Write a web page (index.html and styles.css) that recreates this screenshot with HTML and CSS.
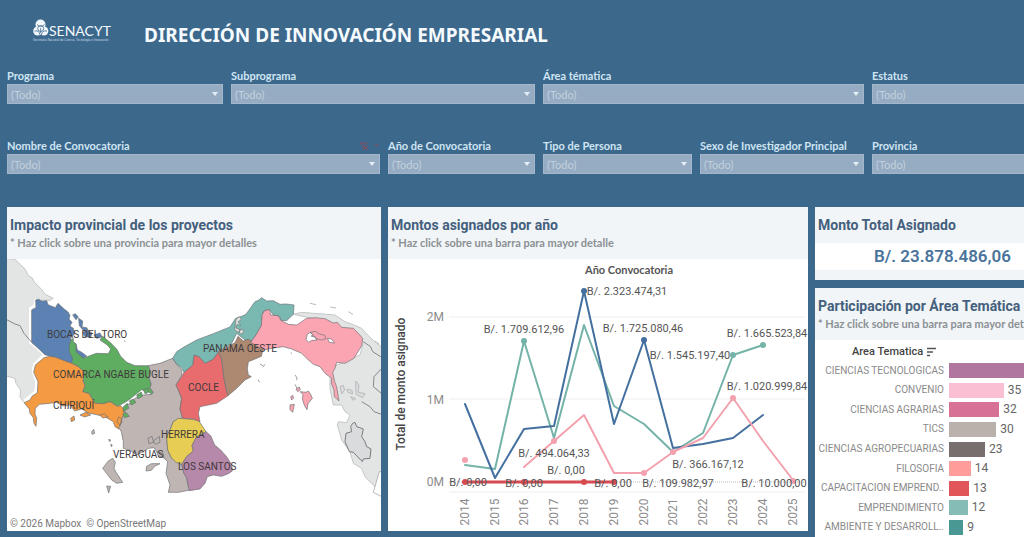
FILE: index.html
```html
<!DOCTYPE html>
<html lang="es">
<head>
<meta charset="utf-8">
<meta name="viewport" content="width=device-width, initial-scale=1">
<title>Dirección de Innovación Empresarial</title>
<link rel="stylesheet" href="styles.css">
</head>
<body>
<header class="top">
  <svg class="logo" viewBox="0 0 78 24" role="img" aria-label="SENACYT">
    <g fill="#f2f8fc">
      <circle cx="7.500" cy="5.500" r="5"/><circle cx="4.800" cy="12" r="4.600"/><circle cx="10.800" cy="12" r="4.600"/>
    </g>
    <g fill="none" stroke="#3c688c" stroke-width=".8">
      <circle cx="7.700" cy="9.500" r="3"/><path d="M4 5.500q3.700 4 7.500 0M1.500 12q5-1 5.500 4M14 12q-5-1-5.500 4M7.700 9v5"/>
    </g>
    <text class="logo-name" x="16" y="17">SENACYT</text>
    <text class="logo-sub" x="0" y="22">Secretaría Nacional de Ciencia, Tecnología e Innovación</text>
  </svg>
  <h1>DIRECCIÓN DE INNOVACIÓN EMPRESARIAL</h1>
</header>

<form class="filters">
  <div class="row row-a">
    <div class="field"><label for="f1">Programa</label><div class="pick"><select id="f1"><option>(Todo)</option></select></div></div>
    <div class="field"><label for="f2">Subprograma</label><div class="pick"><select id="f2"><option>(Todo)</option></select></div></div>
    <div class="field"><label for="f3">Área tématica</label><div class="pick"><select id="f3"><option>(Todo)</option></select></div></div>
    <div class="field"><label for="f4">Estatus</label><div class="pick open"><select id="f4"><option>(Todo)</option></select></div></div>
  </div>
  <div class="row row-b">
    <div class="field">
      <div class="field-head"><label for="f5">Nombre de Convocatoria</label>
        <svg class="clear" viewBox="0 0 22 10" aria-hidden="true"><path d="M2 2h7L6.500 5v3L5 7V5zM6 5l4 4M10 5L6 9" fill="none" stroke="#7d4f63"/><path d="M16 3h5l-2.500 3z" fill="#665a72"/></svg>
      </div>
      <div class="pick"><select id="f5"><option>(Todo)</option></select></div>
    </div>
    <div class="field"><label for="f6">Año de Convocatoria</label><div class="pick"><select id="f6"><option>(Todo)</option></select></div></div>
    <div class="field"><label for="f7">Tipo de Persona</label><div class="pick"><select id="f7"><option>(Todo)</option></select></div></div>
    <div class="field"><label for="f8">Sexo de Investigador Principal</label><div class="pick"><select id="f8"><option>(Todo)</option></select></div></div>
    <div class="field"><label for="f9">Provincia</label><div class="pick open"><select id="f9"><option>(Todo)</option></select></div></div>
  </div>
</form>

<main class="board">
  <section class="card">
    <div class="card-head"><h2>Impacto provincial de los proyectos</h2><p>* Haz click sobre una provincia para mayor detalles</p></div>
    <svg class="plot" viewBox="7 259 374 272" role="img" aria-label="Mapa de Panamá por provincia">
      <g transform="translate(0 255) scale(.33333)" stroke-linejoin="round">
        <g fill="#e3e4e4" stroke="#c4c6c8" stroke-width="3">
          <path d="M15 10L45 13 60 28 75 42 85 62 98 70 103 82 125 103 135 118 160 130 150 136 122 136 108 135 106 155 93 163 93 262 135 298 103 330 101 350 112 382 108 410 70 440 60 425 62 405 48 385 45 370 15 362z"/>
          <path d="M880 178L905 172 940 175 980 178 1005 180 1035 200 1062 210 1085 220 1105 242 1130 265 1150 278V725L1120 690 1095 665 1085 640 1060 625 1050 590 1025 555 1012 510 1015 500 1040 503 1050 480 1035 470 1025 450 1000 450 990 400 990 340 1080 300 1090 262 1020 215 960 195z"/>
        </g>
        <path d="M108 133L104 152 91 160V262L133 298L103 328 99 350 110 382 107 410 72 438" fill="none" stroke="#fff" stroke-width="8"/>
        <path d="M18 193L45 207 60 212 72 235 95 262 120 280 135 298M1090 260L1112 275 1118 290 1150 310M1150 335L1122 365 1120 395 1150 420M1085 440L1110 455 1122 470 1150 480" fill="none" stroke="#85898c" stroke-width="3"/>
        <path d="M1052 515L1058 505 1065 502 1070 515 1090 522 1085 545 1095 560 1100 575 1113 582 1110 610 1090 612 1087 620 1060 592 1048 590 1035 560 1038 535 1055 530z" fill="#d9dbdc" stroke="#777b7e" stroke-width="3"/>
        <path d="M1138 650L1120 712 1145 725V650z" fill="#fff" stroke="#999" stroke-width="2"/>
        <g fill="#d9dbdc" stroke="#b9bbbd" stroke-width="3"><path d="M1020 395l10-4 4 14-9 12zM1040 403l15 2 3 12-14-5zM1067 378l10 12-2 22 20 4-7 12-20-10zM1052 425l15 6-8 5zM930 145l18 4M990 156l18 3M1045 170l14 8M1125 258l12 9"/></g>
        <g stroke="#6b6f72" stroke-width="2">
          <path fill="#5c82b3" d="M95 165L108 158 107 135 116 133 126 139 140 137 144 149 166 158 174 145 190 160 205 172 210 182 207 192 216 202 210 213 220 220 225 236 212 248 215 260 228 266 232 285 245 292 260 303 246 312 232 305 226 318 215 325 190 318 155 305 135 299 95 262z"/>
          <path fill="#5c82b3" d="M218 180l8-4 9 10-7 8zM236 190l12 8-2 18 14 2 6 10-16-2-12-14zM248 232l14-6 14 8-4 14-18-4zM282 240l18-6 6 12-16 4z"/>
          <path fill="#5fad60" d="M208 272L212 256 220 250 220 260 228 268 228 290 250 310 275 300 290 295 325 296 332 282 322 270 300 255 308 244 330 262 350 282 362 304 380 322 405 332 445 332 452 350 446 365 454 388 450 398 460 412 458 420 442 408 425 404 400 424 385 436 370 445 352 454 342 447 330 440 310 446 285 445 275 430 268 416 248 410 255 392 249 378 252 350 235 335 215 325 218 310 208 290z"/>
          <path fill="#f49a42" d="M132 308L150 304 168 307 190 316 215 325 235 335 252 350 249 378 255 392 248 410 268 416 275 430 285 445 310 446 330 440 352 454 362 452 370 462 374 476 366 490 364 505 356 522 345 515 340 500 315 485 285 478 265 474 245 462 224 468 210 450 188 453 170 442 140 446 118 448 106 460 105 476 110 490 108 514 102 505 100 488 90 475 88 462 72 443 90 435 96 424 112 413 114 380 101 352 106 330z"/>
          <path fill="#bfb5b3" d="M445 332L480 325 505 315 518 310 528 325 545 345 546 360 528 390 535 405 545 430 540 462 548 488 520 500 508 530 500 545 503 585 515 610 545 628 552 655 560 668 564 690 570 705 535 712 505 712 510 690 498 655 503 620 490 608 470 590 462 578 446 580 430 590 410 600 390 586 370 580 370 560 364 530 356 518 365 503 366 490 376 475 370 462 378 450 392 445 405 430 430 420 455 418 460 412 450 398 454 388 446 365 452 350z"/>
          <path fill="#5fad60" d="M370 455l12-10 4 15-16 10zM388 438l12-6 8 10-14 8zM410 420l14-9 4 12-14 8zM368 477l10-5 10 12-14 4zM430 405l14-6 2 12-10 6z"/>
          <path fill="#f49a42" d="M240 480l18-8 14 8-18 6zM212 490l10-7 2 12-10 5zM300 480l12-4 12 10-16 3zM356 486l9 5-5 20-9-10z"/>
          <path fill="#bfb5b3" d="M325 618L338 610 346 622 342 640 350 655 368 682 350 685 335 675 322 658 308 640zM320 693l12 1-6 20zM275 530l6-7 3 12-8 3zM440 634l14-8 26 0-16 8-10 12-16 2zM444 550l12-6 5 18-14 4zM460 558l18-14 2 18-14 6zM470 590l20 6 2 12-18-6zM326 553l6 2-3 5zM332 568l5 2-3 5z"/>
          <path fill="#e7cd54" d="M520 500L535 490 565 492 595 496 605 510 618 530 588 548 576 572 580 588 560 605 545 628 528 622 515 610 503 585 500 545 508 530z"/>
          <path fill="#b688aa" d="M618 530L632 542 644 570 662 585 680 605 695 630 697 648 685 656 665 664 640 660 622 665 615 685 600 702 568 707 564 690 560 668 552 655 545 628 560 605 580 588 576 572 588 548z"/>
          <path fill="#e86b6d" d="M552 352L578 330 582 300 598 305 615 325 640 312 655 290 664 310 668 335 672 370 678 400 684 422 650 445 600 455 595 475 600 500 580 492 548 490 540 462 545 430 535 405 528 390 545 365z"/>
          <path fill="#7ab8b2" d="M518 310L530 290 552 276 590 255 640 236 690 216 707 190 725 184 738 178 765 140 775 136 785 128 800 138 820 137 840 148 858 147 882 150 880 178 860 197 842 196 840 185 820 180 808 163 792 168 784 182 786 208 768 240 752 262 735 255 710 235 695 265 655 290 640 312 615 325 598 305 582 300 578 330 552 352 546 340 528 325z"/>
          <path fill="#ad8972" d="M655 290L680 278 706 262 714 244 730 258 745 252 760 262 790 278 784 304 760 314 745 320 742 342 745 360 754 365 735 375 710 400 684 422 678 400 672 370 668 335 664 310z"/>
          <path fill="#dde0df" stroke="#777" d="M708 193l10-8 6 8-10 8 9 11-12-4-4 10 15 8-8 5-10-6zM720 222l12 4-6 12-8-4z"/>
          <path fill="#fba5b3" d="M752 262L768 240 784 212 786 182 792 168 808 163 812 180 835 182 842 196 865 208 890 210 905 200 920 190 945 188 975 191 1000 204 1012 202 1025 217 1060 220 1075 235 1088 250 1085 272 1062 310 1035 325 1010 322 1005 340 998 352 1004 380 1010 395 1017 438 1003 425 1002 405 994 385 995 370 975 355 960 335 940 328 922 312 905 295 875 282 850 275 820 279 790 285z"/>
          <path fill="#fba5b3" d="M900 410l18 2 7-4 8 12 4 10-13 16-3 18-8-14-6-18 2-14zM872 425l6-4 3 8-6 6zM870 450l13-2-5 24-8-8zM888 402l10-6 3 8-8 6z"/>
          <path fill="#fff" d="M922 238l8-6 8 6-4 6 12 2 4 10-14 0-10 6-8-8zM982 250l12 2 10 12-16-2z"/>
          <path fill="none" d="M930 232l16-3 12 8 16 4 4 10-14 4-16-4-6-8zM780 327l10 6M788 336l8-8M774 374l5 8M886 360l6 12-4 3M872 294l4 1M885 388l6 12M372 258l4 1"/>
        </g>
      </g>
      <g class="place">
        <text x="47" y="338">BOCAS DEL TORO</text>
        <text x="53" y="378">COMARCA NGABE BUGLE</text>
        <text x="53" y="409">CHIRIQUÍ</text>
        <text x="203" y="352">PANAMA OESTE</text>
        <text x="188" y="391">COCLE</text>
        <text x="161" y="438">HERRERA</text>
        <text x="113" y="458">VERAGUAS</text>
        <text x="178" y="470">LOS SANTOS</text>
      </g>
      <text class="credit" x="10" y="527">© 2026 Mapbox&#160; © OpenStreetMap</text>
    </svg>
  </section>

  <section class="card">
    <div class="card-head"><h2>Montos asignados por año</h2><p>* Haz click sobre una barra para mayor detalle</p></div>
    <svg class="plot" viewBox="388 259 420 272" role="img" aria-label="Montos asignados por año">
      <path d="M449 317H805M449 399H805M449 492H805" stroke="#eeeeee" fill="none"/>
      <path d="M449 482H805" stroke="#bbb" stroke-dasharray="1 1"/>
      <text class="axis-title" x="629" y="274" text-anchor="middle">Año Convocatoria</text>
      <text class="axis-side" transform="translate(405 384) rotate(-90)" text-anchor="middle">Total de monto asignado</text>
      <g class="tick" text-anchor="end">
        <text x="444" y="321">2M</text><text x="444" y="404">1M</text><text x="444" y="486">0M</text>
      </g>
      <g fill="none" stroke-width="2" stroke-linejoin="round" stroke-linecap="round">
        <path stroke="#74b3a8" d="M465 465L495 469 524 341 554 438 584 325 614 406 644 424 673 452 703 433 733 355 763 345"/>
        <path stroke="#44709f" d="M465 404L495 478 524 429 554 426 584 291 614 424 644 340 673 448 703 444 733 438 763 415"/>
        <path stroke="#f3a1ae" d="M524 467L554 441 584 415 614 473H644L673 452 703 438 733 398 763 441 793 480"/>
        <path stroke="#d64b50" stroke-width="3" d="M465 482H614"/>
      </g>
      <g fill="#74b3a8"><circle cx="524" cy="341" r="3"/><circle cx="733" cy="355" r="3"/><circle cx="763" cy="345" r="3"/></g>
      <g fill="#44709f"><circle cx="584" cy="291" r="3"/><circle cx="644" cy="340" r="3"/></g>
      <g fill="#f3a1ae"><circle cx="465" cy="460" r="3"/><circle cx="554" cy="441" r="3"/><circle cx="644" cy="473" r="3"/><circle cx="673" cy="452" r="3"/><circle cx="733" cy="398" r="3"/><circle cx="793" cy="481" r="3"/></g>
      <g fill="#d64b50"><circle cx="465" cy="482" r="3"/><circle cx="524" cy="482" r="3"/><circle cx="584" cy="482" r="3"/><circle cx="614" cy="482" r="3"/></g>
      <g class="amount" text-anchor="middle">
        <text x="524" y="333">B/. 1.709.612,96</text>
        <text x="627" y="295">B/. 2.323.474,31</text>
        <text x="643" y="332">B/. 1.725.080,46</text>
        <text x="690" y="359">B/. 1.545.197,40</text>
        <text x="767" y="337">B/. 1.665.523,84</text>
        <text x="767" y="390">B/. 1.020.999,84</text>
        <text x="554" y="457">B/. 494.064,33</text>
        <text x="566" y="474">B/. 0,00</text>
        <text x="468" y="486">B/. 0,00</text>
        <text x="524" y="487">B/. 0,00</text>
        <text x="613" y="487">B/. 0,00</text>
        <text x="708" y="468">B/. 366.167,12</text>
        <text x="678" y="487">B/. 109.982,97</text>
        <text x="774" y="487">B/. 10.000,00</text>
      </g>
      <g class="tick" text-anchor="middle">
        <text transform="translate(469 512) rotate(-90)">2014</text><text transform="translate(499 512) rotate(-90)">2015</text>
        <text transform="translate(528 512) rotate(-90)">2016</text><text transform="translate(558 512) rotate(-90)">2017</text>
        <text transform="translate(588 512) rotate(-90)">2018</text><text transform="translate(618 512) rotate(-90)">2019</text>
        <text transform="translate(648 512) rotate(-90)">2020</text><text transform="translate(677 512) rotate(-90)">2021</text>
        <text transform="translate(707 512) rotate(-90)">2022</text><text transform="translate(737 512) rotate(-90)">2023</text>
        <text transform="translate(767 512) rotate(-90)">2024</text><text transform="translate(797 512) rotate(-90)">2025</text>
      </g>
    </svg>
  </section>

  <div class="side">
    <section class="card total">
      <h2>Monto Total Asignado</h2>
      <p class="sum">B/. 23.878.486,06</p>
    </section>
    <section class="card areas">
      <div class="card-head"><h2>Participación por Área Temática</h2><p>* Haz click sobre una barra para mayor detal</p></div>
      <div class="areas-title">Area Tematica
        <svg class="sort" viewBox="0 0 10 10" aria-hidden="true"><path d="M1 1.500h9M1 5h6M1 8.500h3" stroke="#555" stroke-width="1.500"/></svg>
      </div>
      <ul class="bars">
        <li><span class="name">CIENCIAS TECNOLOGICAS</span><span class="track"><i class="c1" style="width:100%"></i></span></li>
        <li><span class="name">CONVENIO</span><span class="track"><i class="c2" style="width:73%"></i><b>35</b></span></li>
        <li><span class="name">CIENCIAS AGRARIAS</span><span class="track"><i class="c3" style="width:67%"></i><b>32</b></span></li>
        <li><span class="name">TICS</span><span class="track"><i class="c4" style="width:63%"></i><b>30</b></span></li>
        <li><span class="name">CIENCIAS AGROPECUARIAS</span><span class="track"><i class="c5" style="width:48%"></i><b>23</b></span></li>
        <li><span class="name">FILOSOFIA</span><span class="track"><i class="c6" style="width:29%"></i><b>14</b></span></li>
        <li><span class="name">CAPACITACION EMPREND..</span><span class="track"><i class="c7" style="width:27%"></i><b>13</b></span></li>
        <li><span class="name">EMPRENDIMIENTO</span><span class="track"><i class="c8" style="width:25%"></i><b>12</b></span></li>
        <li><span class="name">AMBIENTE Y DESARROLL..</span><span class="track"><i class="c9" style="width:19%"></i><b>9</b></span></li>
      </ul>
    </section>
  </div>
</main>
</body>
</html>
```

FILE: styles.css
```css
* { box-sizing: border-box; }
body {
  margin: 0;
  height: 100vh;
  overflow: hidden;
  display: flex;
  flex-direction: column;
  padding-left: 7px;
  background: #3c688c;
  font-family: Roboto, "Noto Sans", sans-serif;
  font-size: 11px;
}
h1, h2, p, ul { margin: 0; padding: 0; }
.top { display: flex; align-items: center; gap: 33px; height: 68px; padding: 2px 0 0 26px; flex: none; }
.logo { width: 78px; height: 24px; margin-bottom: 8px; overflow: visible; }
.logo-name { font: 14px Lato, sans-serif; fill: #f2f8fc; }
.logo-sub { font: 3px "Liberation Sans", sans-serif; fill: #c9dbe8; }
h1 { font: 700 19px/28px "Noto Sans", sans-serif; color: #f4fafd; white-space: nowrap; }

.filters { display: flex; flex-direction: column; gap: 34px; flex: none; }
.row { display: grid; gap: 8px; }
.row-a { grid-template-columns: 216fr 304fr 321fr 152fr; }
.row-b { grid-template-columns: 373fr 147fr 149fr 164fr 152fr; }
.field { min-width: 0; }
.field-head { display: flex; justify-content: space-between; align-items: center; }
.clear { width: 22px; height: 10px; }
label { display: block; font: 700 11px/16px Lato, sans-serif; color: #cfe5f3; white-space: nowrap; }
.pick { position: relative; }
.pick::after {
  content: "";
  position: absolute;
  right: 5px;
  top: 8px;
  border: 3px solid transparent;
  border-top: 4px solid #e6eef5;
  border-bottom: 0;
  pointer-events: none;
}
.open::after { display: none; }
select {
  appearance: none;
  display: block;
  width: 100%;
  height: 20px;
  padding: 0 3px;
  border: 1px solid #a3b7ca;
  border-radius: 0;
  background: #95acc2;
  color: #c3d1de;
  font: 11px Lato, sans-serif;
}
.open select { border-right: 0; }

.board { display: grid; grid-template-columns: 374fr 420fr 209fr; gap: 7px; padding-top: 33px; align-items: start; flex: 1; min-height: 0; }
.card { background: #fff; min-width: 0; overflow: hidden; }
.card-head { background: #f1f5f7; height: 52px; padding: 8px 3px 0; white-space: nowrap; }
h2 { font-size: 14px; line-height: 20px; font-weight: 700; color: #44607d; }
.card-head p { font: 700 11px/16px Lato, sans-serif; color: #8b9094; }
.plot { display: block; width: 100%; height: auto; }

.place { font: 10px Roboto, sans-serif; fill: #3f3a3c; }
.credit { font: 10px Roboto, sans-serif; fill: #777; }
.axis-title { font: 700 11px Lato, sans-serif; fill: #555; }
.axis-side { font-size: 12px; font-weight: 500; fill: #444; }
.tick { font-size: 12px; fill: #8b8b8b; }
.amount { font-size: 11px; fill: #555; }

.side { display: flex; flex-direction: column; gap: 8px; min-width: 0; align-self: stretch; }
.total { background: #f1f5f7; height: 73px; padding-top: 8px; flex: none; }
.total h2, .areas h2 { white-space: nowrap; }
.total h2 { padding: 0 3px; }
.sum { margin-top: 8px; padding-right: 13px; background: #fff; text-align: right; font-size: 17px; line-height: 27px; font-weight: 600; color: #4a739b; }
.areas { flex: 1; }
.areas-title { display: flex; align-items: center; gap: 3px; padding: 4px 0 0 37px; line-height: 16px; font-weight: 500; color: #444; }
.sort { width: 10px; height: 10px; }
.bars { list-style: none; display: flex; flex-direction: column; height: 177px; padding-top: 1px; }
.bars li { display: grid; grid-template-columns: 129fr 75fr; gap: 5px; align-items: center; flex: 1; }
.name { font: 10px/16px Roboto, sans-serif; color: #8a8a8a; white-space: nowrap; display: flex; justify-content: flex-end; min-width: 0; }
.track { display: flex; align-items: center; gap: 4px; min-width: 0; }
.track i { height: 15px; flex: none; }
.track b { font-size: 12px; line-height: 15px; font-weight: 400; color: #666; }
.c1 { background: #b176a0; }
.c2 { background: #fabfd2; }
.c3 { background: #d77296; }
.c4 { background: #bab0ac; }
.c5 { background: #796e6e; }
.c6 { background: #ff9d9a; }
.c7 { background: #e15759; }
.c8 { background: #86bcb6; }
.c9 { background: #499894; }
```
